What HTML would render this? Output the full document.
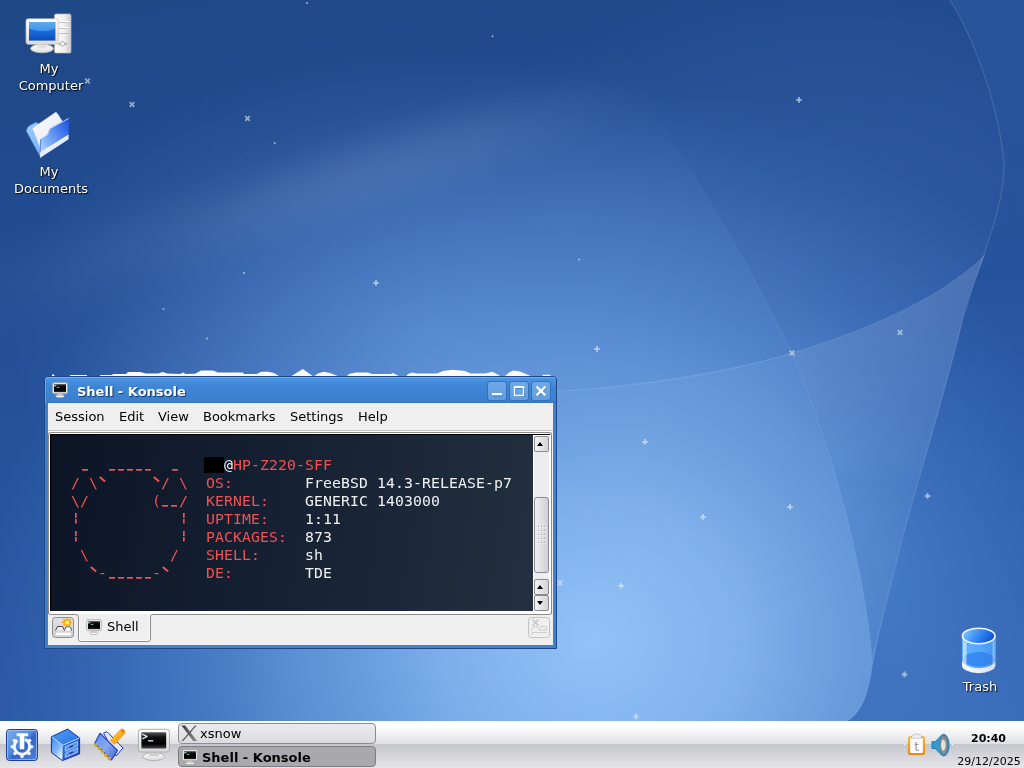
<!DOCTYPE html>
<html><head><meta charset="utf-8"><title>TDE Desktop</title>
<style>
*{box-sizing:border-box;margin:0;padding:0}
html,body{width:1024px;height:768px;overflow:hidden}
body{position:relative;will-change:transform;font-family:"DejaVu Sans","Liberation Sans",sans-serif;font-size:13px;color:#000;background:#2c5aa0}
#bg{position:absolute;left:0;top:0;width:1024px;height:768px}
.abs{position:absolute}
.dlabel{position:absolute;text-align:center;color:#fff;font-size:13px;line-height:17px;text-shadow:1px 1px 1px rgba(0,0,0,.85),0 0 2px rgba(0,0,0,.55)}
.fl{position:absolute;width:5px;height:5px}
/* window */
#win{position:absolute;left:44px;top:376px;width:513px;height:273px;background:#3c82d0;border:1px solid #1f4889;border-radius:4px 4px 0 0}
#title{position:absolute;left:0;top:0;width:511px;height:26px;border-top:1px solid #6eaef2;border-left:1px solid #62a4ec;border-radius:3px 3px 0 0;background:linear-gradient(to bottom,#4b94e3 0,#3e86d5 35%,#3a80cc 92%,#3273be 100%)}
#title .t{position:absolute;left:31px;top:6px;font-weight:bold;font-size:13px;line-height:16px;color:#fff;text-shadow:1px 1px 1px rgba(0,10,50,.65)}
.wb{position:absolute;top:3px;width:20px;height:20px;border-radius:3px;background:linear-gradient(to bottom,#72a9e6,#609ddf);border:1px solid #3570ba}
#client{position:absolute;left:3px;top:26px;width:505px;height:242px;background:#efefef}
#menu{position:absolute;left:0;top:0;width:505px;height:27px;font-size:13px;line-height:16px;border-bottom:0}
#menu span{position:absolute;top:6px}
#frame{position:absolute;left:0;top:29px;width:504px;height:182px;border:1px solid #8c8c8c;border-bottom:0;border-radius:3px 3px 0 0;background:#fff}
#inner{position:absolute;left:1px;top:1px;width:500px;height:177px;border-top:1px solid #000;border-left:1px solid #000;background:#fff}
#term{position:absolute;left:0;top:0;width:482px;height:176px;background:linear-gradient(100deg,#0c1526 0,#152032 45%,#223040 100%);font-family:"DejaVu Sans Mono","Liberation Mono",monospace;font-size:14.800px;letter-spacing:0.090px;line-height:18px;color:#f2f2f2;white-space:pre;overflow:hidden}
#term .r{color:#f05252}
#term div{position:absolute;left:2px;height:18px}
#term .blk{background:#000;display:inline-block;width:20px;height:16px;vertical-align:top;margin-left:-2px;letter-spacing:0;position:relative;top:1px}
#term .bt{color:transparent;position:relative}
#term .bt::after{content:"";position:absolute;left:1.300px;top:3.700px;width:6.500px;height:2px;background:#f05252;transform:rotate(40deg)}
#term .u{color:transparent;background:linear-gradient(#f05252,#f05252) no-repeat 1.500px 12.700px/6px 1.700px}
#term .p{color:transparent;background:linear-gradient(to bottom,#f05252 0,#f05252 44%,transparent 44%,transparent 56%,#f05252 56%) no-repeat 3.600px 2.500px/1.700px 10.500px}
#sb{position:absolute;left:483px;top:1px;width:15px;height:175px;background:#ededf0}
.sbb{position:absolute;left:0;width:15px;height:16px;border:1px solid #8a8a90;border-radius:2px;background:linear-gradient(to right,#f4f4f6,#d4d4d9)}
.sbb i{position:absolute;left:2px;width:0;height:0;border-left:3.500px solid transparent;border-right:3.500px solid transparent}
.up i{top:5px;border-bottom:4px solid #000}
.dn i{top:5px;border-top:4px solid #000}
#tabbar{position:absolute;left:0;top:211px;width:505px;height:31px}
/* taskbar */
#panel{position:absolute;left:0;top:721px;width:1024px;height:47px;background:linear-gradient(to bottom,#fff 0,#fff 12%,#e1e1e5 48%,#c5c5cd 49%,#e6e6ea 100%)}
.task{position:absolute;left:178px;width:198px;height:21px;border:1px solid #8c8c90;border-radius:4px;font-size:13px;line-height:16px}
.task span{position:absolute;left:21px;top:2px}
</style></head><body>
<svg width="0" height="0" style="position:absolute"><defs>
<g id="kons">
 <ellipse cx="8" cy="14.200" rx="4.300" ry="1.400" fill="#f6f6f6" stroke="#9e9e9e" stroke-width=".6"/>
 <path d="M5.800 11.500h4.400l.9 2.600H4.900z" fill="#cdcdcd"/>
 <rect x="0.700" y="0.700" width="14.600" height="11" rx="1.300" fill="#f4f4f4" stroke="#a2a2a2" stroke-width=".8"/>
 <rect x="2" y="2.200" width="12" height="8" fill="url(#scr)"/>
 <path d="M2.300 2.600l2.600 1.100-2.600 1.100z" fill="#a6e6ee"/><rect x="4.800" y="4.900" width="2.800" height=".9" fill="#7fc4cc"/>
</g>
<linearGradient id="nb" x1="0" y1="0" x2="0" y2="1"><stop offset="0" stop-color="#e2e2e6"/><stop offset="1" stop-color="#cdcdd3"/></linearGradient>
<linearGradient id="scr" x1="0" y1="0" x2="0" y2="1"><stop offset="0" stop-color="#3a3a3a"/><stop offset=".35" stop-color="#000"/><stop offset=".75" stop-color="#000"/><stop offset="1" stop-color="#2c2c2c"/></linearGradient>
</defs></svg>
<svg id="bg" viewBox="0 0 1024 768">
<defs>
<linearGradient id="g0" x1="0" y1="0" x2="0.250" y2="1"><stop offset="0" stop-color="#1f4886"/><stop offset="0.300" stop-color="#224c92"/><stop offset="0.600" stop-color="#27539e"/><stop offset="1" stop-color="#2d5ca8"/></linearGradient>
<radialGradient id="g1" cx="0" cy="0" r="1" gradientUnits="userSpaceOnUse" gradientTransform="translate(590 640) scale(610 560)"><stop offset="0" stop-color="#8fc1f7" stop-opacity="1"/><stop offset="0.250" stop-color="#82b5f0" stop-opacity=".92"/><stop offset="0.500" stop-color="#6a9fe2" stop-opacity=".74"/><stop offset="0.750" stop-color="#5186d2" stop-opacity=".42"/><stop offset="1" stop-color="#4076c4" stop-opacity="0"/></radialGradient>
<linearGradient id="g2" x1="0" y1="0" x2="0" y2="768" gradientUnits="userSpaceOnUse"><stop offset="0" stop-color="#29569e" stop-opacity=".8"/><stop offset="0.200" stop-color="#27539c" stop-opacity=".85"/><stop offset="0.360" stop-color="#26539d" stop-opacity="1"/><stop offset="0.700" stop-color="#2f60ae" stop-opacity="1"/><stop offset="1" stop-color="#3a6dba" stop-opacity="1"/></linearGradient>
<radialGradient id="g2b" cx="0" cy="0" r="1" gradientUnits="userSpaceOnUse" gradientTransform="translate(880 570) scale(200 330)"><stop offset="0" stop-color="#4f86d2" stop-opacity=".7"/><stop offset=".5" stop-color="#4a80cc" stop-opacity=".35"/><stop offset="1" stop-color="#4a80cc" stop-opacity="0"/></radialGradient>
<clipPath id="cpA"><path d="M950 0 C975 40 1000 110 1004 165 C1004 215 975 270 960 330 C940 410 915 490 901 543 C890 590 878 630 872 667 C868 695 862 712 846 722 L1024 722 L1024 0 Z"/></clipPath>
<linearGradient id="g4" x1="0" y1="0" x2="1" y2="0"><stop offset="0" stop-color="#fff" stop-opacity="0"/><stop offset="1" stop-color="#fff" stop-opacity=".07"/></linearGradient>
<linearGradient id="g5" x1="0" y1="0" x2="650" y2="0" gradientUnits="userSpaceOnUse"><stop offset="0" stop-color="#fff" stop-opacity=".02"/><stop offset=".55" stop-color="#fff" stop-opacity=".085"/><stop offset=".75" stop-color="#fff" stop-opacity=".07"/><stop offset="1" stop-color="#fff" stop-opacity="0"/></linearGradient>
<linearGradient id="g6" x1="440" y1="0" x2="640" y2="0" gradientUnits="userSpaceOnUse"><stop offset="0" stop-color="#a8d0ff" stop-opacity="0"/><stop offset="1" stop-color="#a8d0ff" stop-opacity=".10"/></linearGradient>
<linearGradient id="g7" x1="0" y1="60" x2="0" y2="360" gradientUnits="userSpaceOnUse"><stop offset="0" stop-color="#214c92" stop-opacity="0"/><stop offset=".45" stop-color="#214c92" stop-opacity=".16"/><stop offset=".8" stop-color="#214c92" stop-opacity=".1"/><stop offset="1" stop-color="#214c92" stop-opacity=".04"/></linearGradient>
<filter id="blr" x="-20%" y="-50%" width="140%" height="200%"><feGaussianBlur stdDeviation="16"/></filter>
<linearGradient id="g8" x1="0" y1="260" x2="0" y2="660" gradientUnits="userSpaceOnUse"><stop offset="0" stop-color="#fff" stop-opacity=".13"/><stop offset=".45" stop-color="#fff" stop-opacity=".03"/><stop offset=".55" stop-color="#2d5fae" stop-opacity=".06"/><stop offset="1" stop-color="#2d5fae" stop-opacity=".3"/></linearGradient>
<radialGradient id="g1b" cx="0" cy="0" r="1" gradientUnits="userSpaceOnUse" gradientTransform="translate(430 330) scale(420 280)"><stop offset="0" stop-color="#72a5e6" stop-opacity=".38"/><stop offset=".5" stop-color="#72a5e6" stop-opacity=".2"/><stop offset="1" stop-color="#72a5e6" stop-opacity="0"/></radialGradient>
<radialGradient id="g1c" cx="0" cy="0" r="1" gradientUnits="userSpaceOnUse" gradientTransform="translate(820 230) scale(330 260)"><stop offset="0" stop-color="#6a9ce0" stop-opacity=".16"/><stop offset=".6" stop-color="#6a9ce0" stop-opacity=".08"/><stop offset="1" stop-color="#6a9ce0" stop-opacity="0"/></radialGradient>
<linearGradient id="g9" x1="0" y1="95" x2="0" y2="660" gradientUnits="userSpaceOnUse"><stop offset="0" stop-color="#fff" stop-opacity="0"/><stop offset=".3" stop-color="#fff" stop-opacity=".07"/><stop offset="1" stop-color="#fff" stop-opacity=".1"/></linearGradient>
</defs>
<rect width="1024" height="768" fill="url(#g0)"/>
<rect width="1024" height="768" fill="url(#g1)"/>
<rect width="1024" height="768" fill="url(#g1b)"/>
<rect width="1024" height="768" fill="url(#g1c)"/>
<!-- diagonal soft band -->
<path d="M-68 278 L642 61 L658 115 L-52 331Z" fill="url(#g5)" filter="url(#blr)"/>
<!-- right of curve A -->
<path d="M950 0 C975 40 1000 110 1004 165 C1004 215 975 270 960 330 C940 410 915 490 901 543 C890 590 878 630 872 667 C868 695 862 712 846 722 L1024 722 L1024 0 Z" fill="url(#g2)"/>
<rect x="600" y="300" width="424" height="430" fill="url(#g2b)" clip-path="url(#cpA)"/>
<!-- inside darkening -->
<path d="M637 95 C680 150 730 230 774 318 L792 353 C860 333 940 300 985 255 C1000 220 1004 190 1004 165 C1000 110 975 40 950 0 L600 0 Z" fill="url(#g7)"/>
<!-- sheet below arc C -->
<path d="M420 398 C560 396 700 380 792 353 C845 480 868 600 872 660 C868 695 862 712 846 722 L420 722 Z" fill="url(#g6)"/>
<!-- sail -->
<path d="M792 353 C860 333 940 300 985 255 C975 280 965 305 960 330 C940 410 915 490 901 543 C890 590 878 630 872 660 C868 600 845 480 792 353 Z" fill="url(#g8)"/>
<path d="M540 392 C640 388 730 372 792 353 C860 333 940 300 985 255" fill="none" stroke="#fff" stroke-opacity=".11" stroke-width="1"/>
<path d="M637 95 C680 150 730 230 774 318 L792 353 C845 480 868 600 872 660" fill="none" stroke="url(#g9)" stroke-width="1"/>
<path d="M950 0 C975 40 1000 110 1004 165 C1004 215 975 270 960 330 C940 410 915 490 901 543 C890 590 878 630 872 667 C868 695 862 712 846 722" fill="none" stroke="#fff" stroke-opacity=".13" stroke-width="1.200"/>
</svg>

<!-- My Computer -->
<svg class="abs" style="left:24px;top:10px" width="50" height="48" viewBox="24 10 50 48">
 <defs>
  <linearGradient id="tw" x1="0" y1="0" x2="1" y2="0"><stop offset="0" stop-color="#fdfdfd"/><stop offset=".6" stop-color="#efefef"/><stop offset="1" stop-color="#c9c9c9"/></linearGradient>
  <linearGradient id="scb" x1="0" y1="0" x2="0" y2="1"><stop offset="0" stop-color="#3f97ea"/><stop offset=".45" stop-color="#1a6fdc"/><stop offset="1" stop-color="#0a4bbd"/></linearGradient>
  <linearGradient id="mon" x1="0" y1="0" x2="0" y2="1"><stop offset="0" stop-color="#fff"/><stop offset="1" stop-color="#dedede"/></linearGradient>
 </defs>
 <rect x="54.500" y="14" width="16.500" height="39" rx="1.500" fill="url(#tw)" stroke="#b9b9b9" stroke-width=".7"/>
 <path d="M59 22.500h10.500M59 28.500h10.500M59 33.500h10.500" stroke="#c4c4c4" stroke-width="1"/>
 <path d="M59 21.500h10.500M59 27.500h10.500" stroke="#fff" stroke-width="1"/>
 <circle cx="62.500" cy="43.800" r="2.300" fill="#f4f4f4" stroke="#9a9a9a" stroke-width=".8"/>
 <path d="M65 43.800h2.500" stroke="#aaa" stroke-width="1.500"/>
 <circle cx="59.200" cy="43.800" r=".9" fill="#5cbf5c"/>
 <ellipse cx="42" cy="48.500" rx="11.500" ry="4.300" fill="url(#mon)" stroke="#c6c6c6" stroke-width=".6"/>
 <path d="M36 43.500h12l-1.500 4.500h-9z" fill="#e2e2e2"/>
 <rect x="26" y="18.800" width="32.300" height="25.500" rx="2.200" fill="url(#mon)" stroke="#c2c2c2" stroke-width=".7"/>
 <rect x="29" y="22" width="26.400" height="18.600" fill="url(#scb)"/>
 <path d="M29 22h26.400v6.500q-13 5-26.400 0z" fill="#7cc0f8" fill-opacity=".45"/>
</svg>
<div class="dlabel" style="left:4px;top:60px;width:92px"><span style="position:relative;left:-1px">My</span><br><span style="position:relative;left:1px">Computer</span></div>
<!-- My Documents -->
<svg class="abs" style="left:24px;top:108px" width="50" height="54" viewBox="24 108 50 54">
 <defs>
  <linearGradient id="ff" x1="1" y1="0" x2="0" y2=".9"><stop offset="0" stop-color="#1f4ee6"/><stop offset=".35" stop-color="#4a7ff0"/><stop offset=".7" stop-color="#7fb0f8"/><stop offset="1" stop-color="#c4dcff"/></linearGradient>
  <linearGradient id="fb" x1="0" y1="0" x2="1" y2="1"><stop offset="0" stop-color="#9fd0ff"/><stop offset="1" stop-color="#6aa6f0"/></linearGradient>
  <linearGradient id="pp" x1="0" y1="0" x2="1" y2="1"><stop offset="0" stop-color="#fff"/><stop offset="1" stop-color="#dfe3f2"/></linearGradient>
 </defs>
 <path d="M26.500 131 Q27 126.500 31 125 L36 122.500 L39 124 L58 114 L61 120 L41 158 Z" fill="url(#fb)" stroke="#6aa8f0" stroke-width=".6"/>
 <path d="M32.500 128.300 L56 112 L62.500 121.500 L41 150 Z" fill="url(#pp)" stroke="#c9d2ea" stroke-width=".5"/>
 <path d="M40 157.800 L40.600 139.500 Q45 137 48 134.500 L50 128.800 L68.800 118.300 L68.500 139.200 Z" fill="url(#ff)" stroke="#2a5fd0" stroke-width=".7"/>
 <path d="M40.300 152 L68.500 134.500 L68.500 139.200 L40 157.800 Z" fill="#e8eefc"/>
 <path d="M40.600 139.500 Q45 137 48 134.500 L50 128.800 L68.800 118.300" fill="none" stroke="#cfe4ff" stroke-width=".8"/>
</svg>
<div class="dlabel" style="left:4px;top:163px;width:94px"><span style="position:relative;left:-2px">My</span><br>Documents</div>
<!-- Trash -->
<svg class="abs" style="left:958px;top:624px" width="42" height="52" viewBox="958 624 42 52">
 <defs>
  <linearGradient id="tb" x1="0" y1="0" x2="1" y2="0"><stop offset="0" stop-color="#62b4ff"/><stop offset=".5" stop-color="#54a9fc"/><stop offset="1" stop-color="#4496f4"/></linearGradient>
  <linearGradient id="tt" x1="0" y1="0" x2="1" y2=".3"><stop offset="0" stop-color="#8ed0ff"/><stop offset=".5" stop-color="#3f93f6"/><stop offset="1" stop-color="#0f58dc"/></linearGradient>
  <linearGradient id="tw2" x1="0" y1="0" x2="1" y2="0"><stop offset="0" stop-color="#fff"/><stop offset="1" stop-color="#d9def0"/></linearGradient>
 </defs>
 <path d="M962 636 V665 A16.700 8.300 0 0 0 995.400 665 V636 Z" fill="url(#tw2)"/>
 <path d="M962 636 V660 A16.700 8.300 0 0 0 995.400 660 V636 Z" fill="url(#tb)"/>
 <path d="M963.500 659 A15.200 7 0 0 1 994 659 A15.200 7.500 0 0 1 963.500 659Z" fill="#2f7eee" fill-opacity=".75"/>
 <path d="M963 640 V664 Q964 667 966.500 668.500 V642.500 Q964 641.500 963 640Z" fill="#fff" fill-opacity=".55"/><path d="M994.600 640 V664 Q994 666 992.500 667 V642 Q994 641 994.600 640Z" fill="#fff" fill-opacity=".35"/><ellipse cx="978.700" cy="636" rx="16.300" ry="7.800" fill="url(#tt)" stroke="#eaf5ff" stroke-width="1.600"/>
</svg>
<div class="dlabel" style="left:940px;top:678px;width:80px">Trash</div>
<svg class="abs" style="left:0;top:0;pointer-events:none" width="1024" height="768" viewBox="0 0 1024 768">
<defs><g id="fx"><path d="M-2.300 -2.300L2.300 2.300M2.300 -2.300L-2.300 2.300" stroke="#dde6f2" stroke-width="1.900" stroke-opacity=".6"/></g>
<g id="fp"><path d="M-1 -2.800h2v1.800h1.800v2h-1.800v1.800h-2v-1.800h-1.800v-2h1.800z" fill="#e4ecf6" fill-opacity=".55"/><rect x="-1" y="-1" width="2" height="2" fill="#e4ecf6" fill-opacity=".25"/></g>
<g id="fd"><circle r="1" fill="#d4deec" fill-opacity=".7"/></g></defs>
<use href="#fx" x="87.5" y="81"/>
<use href="#fx" x="132" y="104.5"/>
<use href="#fx" x="247.5" y="118.5"/>
<use href="#fd" x="274.7" y="143"/>
<use href="#fd" x="307" y="3"/>
<use href="#fd" x="492.5" y="36.3"/>
<use href="#fp" x="799" y="99.9"/>
<use href="#fd" x="244" y="273"/>
<use href="#fp" x="376" y="282.9"/>
<use href="#fd" x="163.5" y="309"/>
<use href="#fd" x="207" y="338.5"/>
<use href="#fd" x="579" y="259.5"/>
<use href="#fp" x="597" y="348.9"/>
<use href="#fx" x="792" y="353"/>
<use href="#fx" x="900" y="332.5"/>
<use href="#fp" x="645" y="441.9"/>
<use href="#fp" x="790" y="506.9"/>
<use href="#fp" x="703" y="516.9"/>
<use href="#fp" x="927.5" y="495.9"/>
<use href="#fx" x="560" y="583"/>
<use href="#fp" x="621" y="585.9"/>
<use href="#fp" x="904.5" y="674.4"/>
<use href="#fp" x="636" y="716.4"/>
<path d="M52 376.300 L52 375 L53 374 L54 375 L55 376 L55 376.300Z M70 376.300 L70 375 L87 375 L87 376.300Z M100 376.300 L100 375 L112 375 L113 374 L126 374 L128 372 L140 372 L146 373.5 L158 373.5 L163 372 L167 373.5 L180 374 L183 372.5 L186 374 L195 373.7 L201 370.6 L213 370.6 L218 372.6 L243 372.6 L244 374 L257 374 L261 371.7 L268 371.7 L274 373 L279 376 L279 376.300Z M291.5 376.300 L291.5 376 L302.8 369 L312.6 376 L312.6 376.300Z M314.2 376.300 L314.2 376 L318 373.5 L323.6 371.7 L330 373 L337.6 376 L337.6 376.300Z M347 376.300 L347 376 L349 374 L355.6 372.6 L368 372.6 L372 374 L391 374 L393 373 L395 374 L398.6 376 L398.6 376.300Z M406.4 376.300 L406.4 376 L408 374 L412.6 372.6 L416 373.5 L437 373.5 L443 371 L452.5 369.8 L465 371 L471 373.5 L485 373.5 L492.3 371.7 L497 374 L500 376 L500 376.300Z M505 376.300 L505 376 L509 372.5 L513.4 370.6 L520 371.5 L530.6 376 L530.6 376.300Z M542.3 376.300 L542.3 376 L543 374.7 L550 374.7 L551 376 L551 376.300Z" fill="#fffafa"/>
</svg>
<div id="win">
 <div id="title">
  <svg class="abs" style="left:6px;top:4px" width="16" height="16" viewBox="0 0 16 16"><use href="#kons"/></svg>
  <span class="t">Shell - Konsole</span>
  <div class="wb" style="left:441px"><svg width="18" height="18" viewBox="0 0 18 18"><path d="M5 12.5h9v2H5z" fill="#2c5fa6" opacity=".6"/><path d="M4 11h10v2.3H4z" fill="#fff"/></svg></div>
  <div class="wb" style="left:463px"><svg width="18" height="18" viewBox="0 0 18 18"><path d="M5.5 6.5h9v8h-9z" fill="none" stroke="#2c5fa6" stroke-opacity=".5"/><path d="M4.5 5h9v8.5h-9z" fill="none" stroke="#fff" stroke-width="1.3"/><path d="M4 4.4h10v1.6H4z" fill="#fff"/></svg></div>
  <div class="wb" style="left:485px"><svg width="18" height="18" viewBox="0 0 18 18"><path d="M5.5 5.5l8.5 8.5M14 5.5l-8.500 8.500" stroke="#2c5fa6" stroke-opacity=".5" stroke-width="2.2"/><path d="M4.600 4.600l8.800 8.800M13.400 4.600l-8.800 8.800" stroke="#fff" stroke-width="2.200"/></svg></div>
 </div>
 <div id="client">
  <div id="menu"><span style="left:7px">Session</span><span style="left:71px">Edit</span><span style="left:110px">View</span><span style="left:155px">Bookmarks</span><span style="left:242px">Settings</span><span style="left:310px">Help</span></div>
  <div class="abs" style="left:0;top:27px;width:505px;height:1px;background:#c6c6c6"></div>
  <div class="abs" style="left:0;top:28px;width:505px;height:1px;background:#fafafa"></div>
  <div id="frame">
   <div id="inner"><div id="term">
<div style="top:21px"><span class="r">   <span class="u">_</span>  <span class="u">_</span><span class="u">_</span><span class="u">_</span><span class="u">_</span><span class="u">_</span>  <span class="u">_</span>   </span><span class="blk">  </span>@<span class="r">HP-Z220-SFF</span></div>
<div style="top:39px"><span class="r">  / \<span class="bt">`</span>     <span class="bt">`</span>/ \  OS:        </span>FreeBSD 14.3-RELEASE-p7</div>
<div style="top:57px"><span class="r">  \/       (<span class="u">_</span><span class="u">_</span>/  KERNEL:    </span>GENERIC 1403000</div>
<div style="top:75px"><span class="r">  <span class="p">|</span>           <span class="p">|</span>  UPTIME:    </span>1:11</div>
<div style="top:93px"><span class="r">  <span class="p">|</span>           <span class="p">|</span>  PACKAGES:  </span>873</div>
<div style="top:111px"><span class="r">   \         /   SHELL:     </span>sh</div>
<div style="top:129px"><span class="r">    <span class="bt">`</span>-<span class="u">_</span><span class="u">_</span><span class="u">_</span><span class="u">_</span><span class="u">_</span>-<span class="bt">`</span>    DE:        </span>TDE</div>
   </div>
   <div id="sb">
    <div class="sbb up" style="top:0"><i></i></div>
    <div class="abs" style="left:0;top:61px;width:15px;height:76px;border:1px solid #8a8a90;border-radius:3px;background:linear-gradient(to right,#f0f0f3,#cfcfd5)"><svg class="abs" style="left:2px;top:27px" width="10" height="20" viewBox="0 0 10 20"><g fill="#a9a9b0"><rect x="1" y="1" width="1" height="1"/><rect x="4" y="1" width="1" height="1"/><rect x="7" y="1" width="1" height="1"/><rect x="1" y="5" width="1" height="1"/><rect x="4" y="5" width="1" height="1"/><rect x="7" y="5" width="1" height="1"/><rect x="1" y="9" width="1" height="1"/><rect x="4" y="9" width="1" height="1"/><rect x="7" y="9" width="1" height="1"/><rect x="1" y="13" width="1" height="1"/><rect x="4" y="13" width="1" height="1"/><rect x="7" y="13" width="1" height="1"/><rect x="1" y="17" width="1" height="1"/><rect x="4" y="17" width="1" height="1"/><rect x="7" y="17" width="1" height="1"/></g><g fill="#fff"><rect x="2" y="2" width="1" height="1"/><rect x="5" y="2" width="1" height="1"/><rect x="8" y="2" width="1" height="1"/><rect x="2" y="6" width="1" height="1"/><rect x="5" y="6" width="1" height="1"/><rect x="8" y="6" width="1" height="1"/><rect x="2" y="10" width="1" height="1"/><rect x="5" y="10" width="1" height="1"/><rect x="8" y="10" width="1" height="1"/><rect x="2" y="14" width="1" height="1"/><rect x="5" y="14" width="1" height="1"/><rect x="8" y="14" width="1" height="1"/><rect x="2" y="18" width="1" height="1"/><rect x="5" y="18" width="1" height="1"/><rect x="8" y="18" width="1" height="1"/></g></svg></div>
    <div class="sbb up" style="top:143px"><i></i></div>
    <div class="sbb dn" style="top:159px;height:16px"><i></i></div>
   </div></div>
  </div>
  <div id="tabbar">
   <svg class="abs" style="left:0;top:0;overflow:visible" width="505" height="31" viewBox="0 0 505 31">
    <path d="M0.500 -4 V-2 Q0.500 0.500 3 0.500 H28 Q30.500 0.500 30.500 3 V25 Q30.500 27.500 33 27.500 H100 Q102.500 27.500 102.500 25 V3 Q102.500 0.500 105 0.500 H501 Q503.500 0.500 503.500 -2 V-4" fill="none" stroke="#8c8c8c"/>
    <path d="M31.500 1 V25 Q31.500 26.500 33 26.500 H100 Q101.500 26.500 101.500 25 V1" fill="none" stroke="#fbfbfb"/>
    <rect x="4.500" y="3.500" width="21" height="20" rx="3" fill="url(#nb)" stroke="#8e8e92"/>
    <g>
     <path d="M7.500 16.500 L9.500 12.500 H14.500 L16.500 16.500" fill="#ececee" stroke="#4a4a4a" stroke-width="1"/>
     <path d="M16.500 16.500 L18 12.800 H21.500 Q23.300 13.300 23.300 15 V16.800 H16.500Z" fill="#fbfbfb"/>
     <path d="M16.500 16.500 L18 12.800 H21.500 Q23.300 13.300 23.300 15 V16.800" fill="none" stroke="#5a5a5a" stroke-width="1"/>
     <rect x="8" y="18.500" width="15" height="2.800" fill="#fff" stroke="#d6d6da" stroke-width=".5"/>
     <path d="M19 4.300 l1.100 2 2.300-1.300-.7 2.400 2.600.9-2.600.9.700 2.500-2.300-1.300-1.100 2.200-1.100-2.200-2.300 1.300.7-2.500-2.600-.9 2.600-.9-.7-2.400 2.300 1.300z" fill="#ffa800" stroke="#ffa800" stroke-width=".9" stroke-linejoin="round"/>
     <circle cx="19" cy="8.400" r="2" fill="#fff39a"/>
    </g>
    <rect x="480.500" y="3.500" width="21" height="20" rx="3" fill="#efefef" stroke="#c2c2c2"/>
    <g stroke="#cdcdcd" fill="none" stroke-width="1">
     <path d="M483.500 16.500 L485.500 12.500 H489 L491.500 16 H498.500 V14 Q498.300 12.500 496.500 12.500 H493.500 Q492 12.500 492 14.300 M484 21 V18.500 H498.500"/>
     <path d="M484.500 5.500 L490.500 11.500 M490.500 5.500 L484.500 11.500" stroke="#c6c6c6" stroke-width="1.600"/>
    </g>
   </svg>
   <svg class="abs" style="left:38px;top:5px" width="16" height="16" viewBox="0 0 16 16"><use href="#kons"/></svg>
   <span class="abs" style="left:59px;top:5px;line-height:16px">Shell</span>
  </div>
 </div>
</div>
<div id="panel">
 <!-- TDE menu -->
 <svg class="abs" style="left:4px;top:6px" width="36" height="36" viewBox="4 727 36 36">
  <defs>
   <linearGradient id="km" x1="0" y1="0" x2="1" y2="1"><stop offset="0" stop-color="#7fb0ee"/><stop offset=".45" stop-color="#4f86dc"/><stop offset=".55" stop-color="#3465c6"/><stop offset="1" stop-color="#4f83d8"/></linearGradient>
  </defs>
  <rect x="6.500" y="729.500" width="31" height="31" rx="3" fill="url(#km)" stroke="#1d3f96" stroke-width="1"/>
  <rect x="7.500" y="730.500" width="29" height="29" rx="2.300" fill="none" stroke="#a8c8f6" stroke-opacity=".7" stroke-width="1"/>
  <g fill="#fff" fill-opacity=".93">
   <path d="M22 735.300 a11 11 0 1 0 0.010 0 Z M22 739.800 a6.600 6.600 0 1 1 -0.010 0 Z" fill-rule="evenodd" transform="rotate(0 22 746.300)" opacity="0"/>
   <g id="teeth" transform="translate(22 746.500)">
    <circle r="7.700" fill="none" stroke="#fff" stroke-opacity=".93" stroke-width="3" stroke-dasharray="40.400 7.980" transform="rotate(-68)"/>
    <g>
     <circle cx="9.700" cy="0.300" r="1.800"/><circle cx="-9.700" cy="0.300" r="1.800"/>
     <circle cx="7" cy="7" r="1.800"/><circle cx="-7" cy="7" r="1.800"/>
     <circle cx="0" cy="9.900" r="1.800"/>
     <circle cx="7.600" cy="-6" r="1.800"/><circle cx="-7.600" cy="-6" r="1.800"/>
    </g>
   </g>
   <path d="M16.600 733.200h11.600v3H24.300v13h-4.600v-13h-3.100z" fill-opacity="1"/>
  </g>
 </svg>
 <!-- file cabinet -->
 <svg class="abs" style="left:49px;top:6px" width="34" height="36" viewBox="49 727 34 36">
  <defs>
   <linearGradient id="ct" x1="0" y1="0" x2="1" y2="1"><stop offset="0" stop-color="#4f9cf6"/><stop offset="1" stop-color="#2a72e4"/></linearGradient>
   <linearGradient id="cl" x1="0" y1="0" x2=".6" y2="1"><stop offset="0" stop-color="#3b86ee"/><stop offset=".6" stop-color="#7db6f8"/><stop offset="1" stop-color="#e6f1ff"/></linearGradient>
   <linearGradient id="cr" x1="0" y1="0" x2="1" y2="1"><stop offset="0" stop-color="#2f74e2"/><stop offset="1" stop-color="#1a48bc"/></linearGradient>
  </defs>
  <path d="M51.400 736.800 L67.700 729 L79.600 738 L62.800 745.200 Z" fill="url(#ct)"/>
  <path d="M51.400 736.800 L62.800 745.200 L62.400 760.600 L51.400 752.500 Z" fill="url(#cl)"/>
  <path d="M62.800 745.200 L79.600 738 L79.600 753.800 L62.400 760.600 Z" fill="url(#cr)"/>
  <path d="M51.400 736.800 L67.700 729 L79.600 738 L79.600 753.800 L62.400 760.600 L51.400 752.500 Z" fill="none" stroke="#14309a" stroke-width="1" stroke-linejoin="round"/>
  <path d="M51.900 737 L62.800 745.200 L79.200 738.200" fill="none" stroke="#cfe6ff" stroke-width=".8"/>
  <path d="M65.200 746.800 L77.600 741.400 V745.800 L65.200 751.400 Z M65.200 753.200 L77.600 747.600 V752.200 L65.200 757.600 Z" fill="#5a98ee" stroke="#b6d2fa" stroke-width=".8"/>
  <path d="M69.500 747.300l3.600-1.600M69.500 753.600l3.600-1.600" stroke="#15318f" stroke-width="1.300"/>
 </svg>
 <!-- notebook + pencil -->
 <svg class="abs" style="left:92px;top:6px" width="36" height="36" viewBox="92 727 36 36">
  <defs>
   <linearGradient id="nbk" x1="0" y1="0" x2="1" y2="1"><stop offset="0" stop-color="#5b8df0"/><stop offset=".5" stop-color="#86a9f2"/><stop offset="1" stop-color="#3f63d8"/></linearGradient>
   <linearGradient id="pen" x1="0" y1="0" x2="1" y2="1"><stop offset="0" stop-color="#ffd830"/><stop offset="1" stop-color="#f58a00"/></linearGradient>
  </defs>
  <path d="M103.500 733 L107 731.700 L123 748 L116 756 Z" fill="#dfeafc" stroke="#1d3cc0" stroke-width="1"/>
  <path d="M100 733.200 L117.500 750.500 L111.500 760 L94.800 743.300 Z" fill="url(#nbk)" stroke="#1d3cc0" stroke-width="1.100" stroke-linejoin="round"/>
  <g fill="none" stroke="#d9b020" stroke-width="1.400"><circle cx="96" cy="744.800" r="1.200"/><circle cx="99.300" cy="748.300" r="1.200"/><circle cx="102.600" cy="751.800" r="1.200"/><circle cx="105.900" cy="755.200" r="1.200"/><circle cx="109.200" cy="758.500" r="1.200"/></g>
  <path d="M110.500 740.500 L120.800 729.300 Q122.500 728.300 124 730 Q125.800 731.800 124.600 733.500 L114.500 744.300 Z" fill="url(#pen)" stroke="#e07a00" stroke-width=".6"/>
  <ellipse cx="122.600" cy="731.200" rx="1.700" ry="1.100" transform="rotate(45 122.600 731.200)" fill="#c9822a"/>
 </svg>
 <!-- konsole big -->
 <svg class="abs" style="left:136px;top:6px" width="36" height="36" viewBox="136 727 36 36">
  <defs>
   <linearGradient id="ks" x1="0" y1="0" x2="0" y2="1"><stop offset="0" stop-color="#555"/><stop offset=".3" stop-color="#111"/><stop offset=".7" stop-color="#000"/><stop offset="1" stop-color="#444"/></linearGradient>
   <linearGradient id="kf" x1="0" y1="0" x2="0" y2="1"><stop offset="0" stop-color="#fff"/><stop offset="1" stop-color="#d6d6d6"/></linearGradient>
  </defs>
  <ellipse cx="153.700" cy="756.600" rx="11" ry="4" fill="url(#kf)" stroke="#adadad" stroke-width=".9"/>
  <path d="M147.500 751.500h12.500l-1.500 4.500h-9.500z" fill="#cfcfcf"/>
  <rect x="138.400" y="729.300" width="31" height="22.700" rx="2.400" fill="url(#kf)" stroke="#a9a9a9" stroke-width=".9"/>
  <rect x="141.400" y="732.300" width="24.800" height="16.300" rx="1" fill="url(#ks)"/>
  <path d="M142.300 733.600l5.300 2.300v1.200l-5.300 2.300v-1.500l3.400-1.400-3.400-1.400z" fill="#dff6f8"/>
  <rect x="148" y="740.200" width="5.200" height="1.300" fill="#d0eef2"/>
 </svg>
 <!-- task buttons -->
 <div class="task" style="top:2px;background:linear-gradient(to bottom,#ebebee,#dcdce0)">
  <svg class="abs" style="left:2px;top:1px" width="16" height="16" viewBox="0 0 16 16"><defs><linearGradient id="xg" x1="0" y1="0" x2="1" y2="1"><stop offset="0" stop-color="#3c3c3c"/><stop offset="1" stop-color="#8a8a8a"/></linearGradient></defs><path d="M0.400 0.500h3.800L16 16h-3.800z" fill="url(#xg)"/><path d="M14 0.500h1.700L2.200 16H0.500z" fill="#5a5a5a"/></svg>
  <span>xsnow</span></div>
 <div class="task" style="top:25px;background:#a9a9ad;font-weight:bold;border-color:#7e7e82">
  <svg class="abs" style="left:3px;top:2px" width="16" height="16" viewBox="0 0 16 16"><use href="#kons"/></svg>
  <span style="left:23px;top:3px">Shell - Konsole</span></div>
 <!-- tray -->
 <svg class="abs" style="left:900px;top:10px" width="56" height="28" viewBox="900 731 56 28">
  <defs><linearGradient id="klg" x1="0" y1="0" x2="0" y2="1"><stop offset="0" stop-color="#f9b53a"/><stop offset="1" stop-color="#f08a0c"/></linearGradient></defs><circle cx="904.500" cy="744.500" r=".7" fill="#fff"/><circle cx="952.500" cy="744.500" r=".7" fill="#fff"/>
  <rect x="909" y="737" width="15" height="17" rx="1.500" fill="#fcfcfc" stroke="url(#klg)" stroke-width="2.200"/>
  <path d="M911.500 738.300 Q911.500 734 916.500 734 Q921.500 734 921.500 738.300Z" fill="#ededf1" stroke="#b4b4bc" stroke-width=".6"/>
  <text x="916.600" y="750.800" font-family="'DejaVu Serif','Liberation Serif',serif" font-size="12" fill="#8a8a8a" text-anchor="middle">t</text>
  <path d="M932 741.700 h3.200 C938 739.500 940 735.500 943.500 734.200 A5.600 10.900 0 0 1 943.500 756 C940 754.700 938 750.700 935.200 748.500 h-3.200 Z" fill="#2f9dd2" stroke="#1b6f9e" stroke-width=".9"/>
  <ellipse cx="943.700" cy="745.100" rx="3.900" ry="9.300" fill="#8e8e8e" stroke="#6a6a6a" stroke-width=".5"/>
  <ellipse cx="943.300" cy="745.100" rx="2.300" ry="5.600" fill="#e2e2e2"/>
 </svg>
 <div class="abs" style="left:955px;top:11px;width:67px;text-align:center;font-weight:bold;font-size:11px;line-height:14px">20:40</div>
 <div class="abs" style="left:956px;top:34px;width:66px;text-align:center;font-size:11px;line-height:14px">29/12/2025</div>
</div>
</body></html>
